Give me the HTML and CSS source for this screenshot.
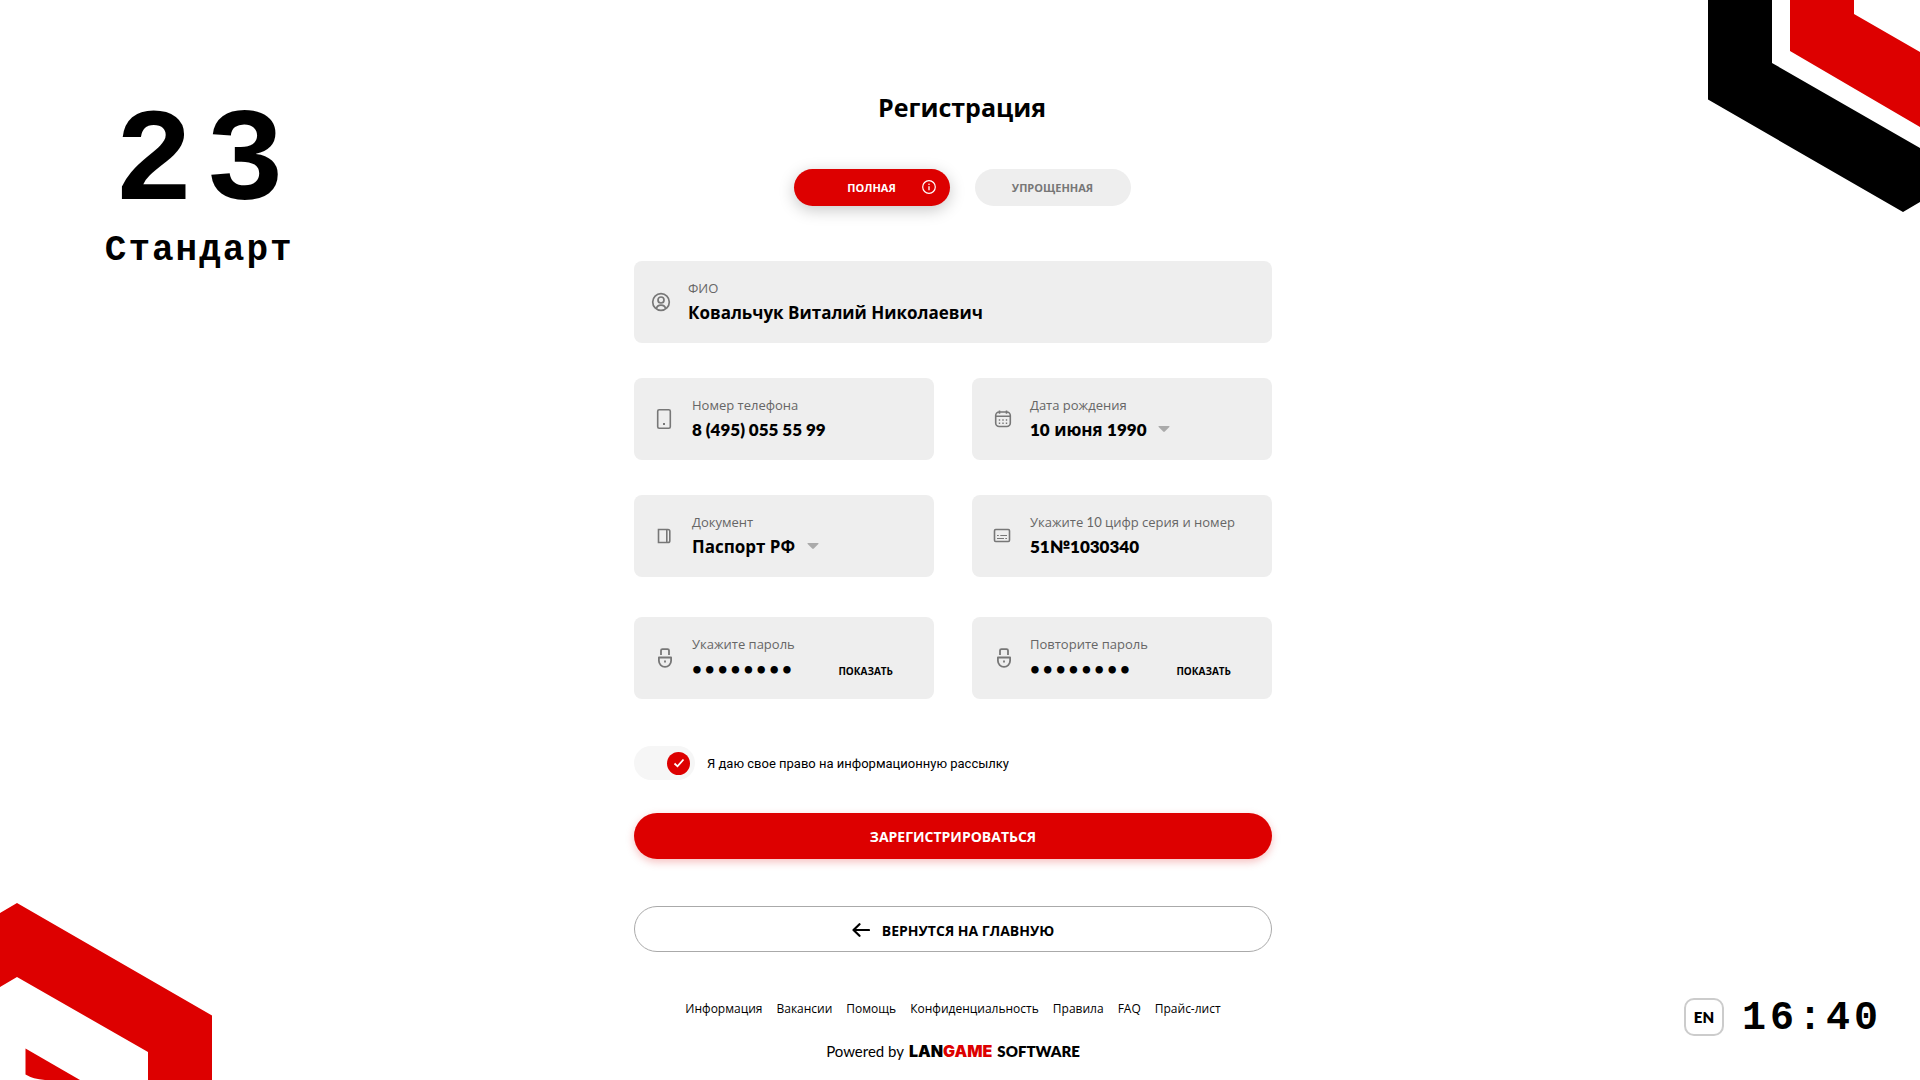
FILE: index.html
```html
<!DOCTYPE html>
<html lang="ru">
<head>
<meta charset="utf-8">
<meta name="viewport" content="width=device-width, initial-scale=1">
<title>Регистрация</title>
<link rel="stylesheet" href="styles.css">
</head>
<body>
<svg class="corner corner-top" viewBox="0 0 212 212" aria-hidden="true">
  <path fill="#000" d="M0 0H64V63L212 148V202L195 212L0 99.500Z"/>
  <path fill="#d00" d="M82 0H146V14L212 52V127L82 51Z"/>
</svg>
<svg class="corner corner-bottom" viewBox="0 0 212 177" aria-hidden="true">
  <path fill="#d00" d="M0 10L17 0L212 112.500V177H148V149L17 74L0 84Z"/>
  <path fill="#d00" d="M25.500 145.500L80 177H45Q33 176 25.500 171.500Z"/>
</svg>
<div class="page">
  <aside class="seat">
    <div class="seat-number">23</div>
    <div class="seat-zone">Стандарт</div>
  </aside>

  <main class="content">
    <header class="head">
      <h1 class="title">Регистрация</h1>
      <div class="tabs">
        <button class="tab tab-active" type="button">Полная
          <svg class="tab-icon" viewBox="0 0 14 14" fill="none" stroke="currentColor" aria-hidden="true"><circle cx="7" cy="7" r="6.300" stroke-width="1.200"/><path d="M7 6.200V10.200" stroke-width="1.300"/><circle cx="7" cy="4.200" r=".8" fill="currentColor" stroke="none"/></svg>
        </button>
        <button class="tab" type="button">Упрощенная</button>
      </div>
    </header>

    <form class="form">
      <div class="fields">
        <div class="field field-wide">
          <svg class="icon" viewBox="0 0 24 24" fill="none" stroke="currentColor" stroke-width="1.700" aria-hidden="true"><circle cx="12" cy="12" r="8.300"/><circle cx="12" cy="10" r="3"/><path d="M7.500 18.500C8 15.800 9.800 15.200 12 15.200S16 15.800 16.500 18.500"/></svg>
          <div class="field-body">
            <label class="label" for="name">ФИО</label>
            <input class="value" id="name" type="text" value="Ковальчук Виталий Николаевич">
          </div>
        </div>

        <div class="field">
          <svg class="icon" viewBox="0 0 24 24" fill="none" stroke="currentColor" stroke-width="1.600" aria-hidden="true"><rect x="5.700" y="2.700" width="12.600" height="18.600" rx="1.500"/><path d="M11 17H13" stroke-width="2"/></svg>
          <div class="field-body">
            <label class="label" for="phone">Номер телефона</label>
            <input class="value latin" id="phone" type="tel" value="8 (495) 055 55 99">
          </div>
        </div>
        <div class="field">
          <svg class="icon" viewBox="0 0 24 24" fill="none" stroke="currentColor" stroke-width="1.600" aria-hidden="true"><rect x="5.700" y="5" width="14.600" height="14.500" rx="3.500"/><path d="M5.700 9.300H20.300M9.500 3.500V6.800M16.500 3.500V6.800"/><path d="M8.800 13H10.200M12.300 13H13.700M15.800 13H17.200M8.800 16.300H10.200M12.300 16.300H13.700M15.800 16.300H17.200"/></svg>
          <div class="field-body">
            <label class="label" for="birth">Дата рождения</label>
            <button class="value value-date" id="birth" type="button">
              <span><span class="latin">10</span> июня <span class="latin">1990</span></span>
              <svg class="caret" viewBox="0 0 12 6" aria-hidden="true"><path d="M1 0H11Q12 .2 11.300 1L6.800 5.600Q6 6.200 5.200 5.600L.7 1Q0 .2 1 0Z" fill="currentColor"/></svg>
            </button>
          </div>
        </div>

        <div class="field">
          <svg class="icon" viewBox="0 0 24 24" fill="none" stroke="currentColor" stroke-width="1.600" aria-hidden="true"><path d="M6.500 5.500H16Q17.800 5.500 17.800 7.300V16.700Q17.800 18.500 16 18.500H6.500ZM14.800 5.500V18.500"/></svg>
          <div class="field-body">
            <label class="label" for="doc">Документ</label>
            <div class="picker">
              <select class="value value-select" id="doc"><option>Паспорт РФ</option></select>
              <svg class="caret" viewBox="0 0 12 6" aria-hidden="true"><path d="M1 0H11Q12 .2 11.300 1L6.800 5.600Q6 6.200 5.200 5.600L.7 1Q0 .2 1 0Z" fill="currentColor"/></svg>
            </div>
          </div>
        </div>
        <div class="field">
          <svg class="icon" viewBox="0 0 24 24" fill="none" stroke="currentColor" stroke-width="1.600" aria-hidden="true"><rect x="4.500" y="5.500" width="15" height="12" rx="1.200"/><path d="M7 11.500H8.800M10.300 11.500H17M7 14.500H14M15.300 14.500H17" stroke-width="1.200"/></svg>
          <div class="field-body">
            <label class="label" for="series">Укажите <span class="latin">10</span> цифр серия и номер</label>
            <input class="value latin" id="series" type="text" value="51№1030340">
          </div>
        </div>
      </div>

      <div class="fields fields-password">
        <div class="field">
          <svg class="icon" viewBox="0 0 24 24" fill="none" stroke="currentColor" stroke-width="1.800" stroke-linejoin="round" aria-hidden="true"><path d="M9 9V4.600Q9 3.200 10.500 3.200H15.500Q17 3.200 17 4.600V9M6.900 11.500H19.100V14.800A6.100 6.100 0 0 1 6.900 14.800Z"/><path d="M12.100 15.500H13.900"/></svg>
          <div class="field-body">
            <label class="label" for="pass">Укажите пароль</label>
            <input class="value value-password" id="pass" type="password" value="qwerty12">
          </div>
          <button class="show" type="button">Показать</button>
        </div>
        <div class="field">
          <svg class="icon" viewBox="0 0 24 24" fill="none" stroke="currentColor" stroke-width="1.800" stroke-linejoin="round" aria-hidden="true"><path d="M10 9V4.600Q10 3.200 11.500 3.200H16.500Q18 3.200 18 4.600V9M7.900 11.500H20.100V14.800A6.100 6.100 0 0 1 7.900 14.800Z"/><path d="M13.100 15.500H14.900"/></svg>
          <div class="field-body">
            <label class="label" for="pass2">Повторите пароль</label>
            <input class="value value-password" id="pass2" type="password" value="qwerty12">
          </div>
          <button class="show" type="button">Показать</button>
        </div>
      </div>

      <label class="consent">
        <input class="toggle" type="checkbox" checked>
        <span class="track"><span class="knob"><svg class="tick" viewBox="0 0 12 12" fill="none" stroke="#fff" stroke-width="1.800" aria-hidden="true"><path d="M1.500 6.500L4.500 9.300L10.500 2.500"/></svg></span></span>
        <span>Я даю свое право на информационную рассылку</span>
      </label>

      <button class="button button-primary" type="submit">Зарегистрироваться</button>
      <button class="button button-outline" type="button">
        <svg class="arrow" viewBox="0 0 18 14" fill="none" stroke="currentColor" stroke-width="2.200" stroke-linecap="round" stroke-linejoin="round" aria-hidden="true"><path d="M17 7H1.500M7.500 1.200L1.500 7L7.500 12.800"/></svg>
        Вернутся на главную
      </button>
    </form>

    <footer class="footer">
      <nav class="links">
        <a href="#">Информация</a>
        <a href="#">Вакансии</a>
        <a href="#">Помощь</a>
        <a href="#">Конфиденциальность</a>
        <a href="#">Правила</a>
        <a href="#">FAQ</a>
        <a href="#">Прайс-лист</a>
      </nav>
      <p class="powered latin"><span>Powered by</span> <span class="brand">LAN<span class="brand-red">GAME</span></span> <b class="software">SOFTWARE</b></p>
    </footer>
  </main>

  <aside class="status">
    <button class="lang latin" type="button">EN</button>
    <time class="clock">16:40</time>
  </aside>
</div>
</body>
</html>
```
FILE: styles.css
```css
* { box-sizing: border-box; }

body {
  margin: 0;
  background: #fff;
  color: #000;
  font-family: "Open Sans", "Noto Sans", sans-serif;
  font-size: 13px;
}

button, input, select { font-family: inherit; color: inherit; }
button { border: 0; padding: 0; cursor: pointer; }
.latin { font-family: Lato, "Noto Sans", sans-serif; }

.corner { position: absolute; width: 212px; z-index: -1; }
.corner-top { top: 0; right: 0; }
.corner-bottom { bottom: 0; left: 0; }

.page {
  display: grid;
  grid-template-columns: 1fr 638px 1fr;
  min-height: 100vh;
  padding-right: 14px;
}

.seat {
  justify-self: start;
  padding: 98px 0 0 102px;
  font-family: "Liberation Mono", monospace;
  font-weight: 700;
  text-align: center;
}
.seat-number { padding-left: 12px; font-size: 132px; line-height: 132px; letter-spacing: 12px; }
.seat-zone { font-size: 36px; line-height: 42px; letter-spacing: 2px; }

.head { padding: 88px 0 0 18px; text-align: center; }
.title { margin: 0; font-size: 25px; line-height: 38px; }
.tabs { display: flex; justify-content: center; gap: 25px; margin-top: 43px; }
.tab {
  position: relative;
  width: 156px;
  height: 37px;
  border-radius: 19px;
  background: #eee;
  color: #777;
  font-size: 11px;
  font-weight: 700;
  text-transform: uppercase;
}
.tab-active { background: #d00; color: #fff; box-shadow: 0 4px 16px rgba(0, 0, 0, .22); }
.tab-icon { position: absolute; top: 11px; right: 14px; width: 14px; height: 14px; }

.fields { display: grid; grid-template-columns: 1fr 1fr; gap: 35px 38px; margin-top: 55px; }
.fields-password { margin-top: 40px; }
.field {
  display: flex;
  align-items: center;
  gap: 16px;
  height: 82px;
  padding: 0 18px;
  border-radius: 8px;
  background: #eee;
}
.field-wide { grid-column: 1 / -1; padding-left: 15px; gap: 15px; }
.icon { flex: none; width: 24px; height: 24px; color: #777; }
.field-body { flex: 1; min-width: 0; display: flex; flex-direction: column; gap: 2px; padding-bottom: 2px; }
.label { color: #666; font-size: 13px; line-height: 20px; white-space: nowrap; }
.value {
  width: 100%;
  height: 24px;
  padding: 0;
  border: 0;
  background: none;
  font-size: 17px;
  font-weight: 700;
}
.value.latin, .value .latin { font-weight: 800; }
.value-select { width: auto; appearance: none; }
.value-password { font-family: Lato, sans-serif; letter-spacing: 3px; }
.picker, .value-date { display: flex; align-items: center; gap: 11px; }
.caret { width: 12px; height: 6px; color: #aaa; }
.show {
  margin: 26px 23px 0 0;
  background: none;
  font-size: 10px;
  font-weight: 700;
  text-transform: uppercase;
}

.consent {
  display: flex;
  align-items: center;
  gap: 12px;
  margin-top: 47px;
  font-family: Roboto, sans-serif;
}
.toggle { position: absolute; opacity: 0; }
.track {
  display: flex;
  align-items: center;
  width: 61px;
  height: 34px;
  padding: 0 5px;
  border-radius: 17px;
  background: #f6f6f6;
}
.knob { display: grid; place-items: center; width: 23px; height: 23px; border-radius: 50%; background: #aaa; }
.toggle:checked + .track { justify-content: flex-end; }
.toggle:checked + .track .knob { background: #d00; }
.tick { width: 12px; height: 12px; }

.button {
  display: flex;
  align-items: center;
  justify-content: center;
  gap: 12px;
  width: 100%;
  height: 46px;
  border-radius: 23px;
  font-size: 14px;
  font-weight: 700;
  text-transform: uppercase;
}
.button-primary { margin-top: 33px; background: #d00; color: #fff; box-shadow: 0 3px 8px rgba(221, 0, 0, .25); }
.button-outline { margin-top: 47px; padding-top: 2px; border: 1px solid #aaa; background: #fff; }
.arrow { width: 18px; height: 14px; }

.footer { padding-top: 47px; text-align: center; }
.links { display: flex; justify-content: center; gap: 14px; font-size: 12px; line-height: 20px; }
.links a { color: inherit; text-decoration: none; }
.powered { display: flex; justify-content: center; align-items: baseline; gap: 5px; margin: 21px 0 0; font-size: 15px; line-height: 22px; }
.brand { font-family: Inter, sans-serif; font-size: 16px; font-weight: 900; }
.brand-red { color: #d00; }
.software { font-weight: 800; }

.status {
  display: flex;
  align-items: center;
  align-self: end;
  justify-self: end;
  gap: 18px;
  padding: 0 24px 38px 0;
}
.lang {
  width: 40px;
  height: 38px;
  border: 2px solid #ccc;
  border-radius: 10px;
  background: #fff;
  font-size: 15px;
  font-weight: 800;
}
.clock { padding-top: 4px; font: 700 40px/46px "Liberation Mono", monospace; letter-spacing: 4px; }
```
